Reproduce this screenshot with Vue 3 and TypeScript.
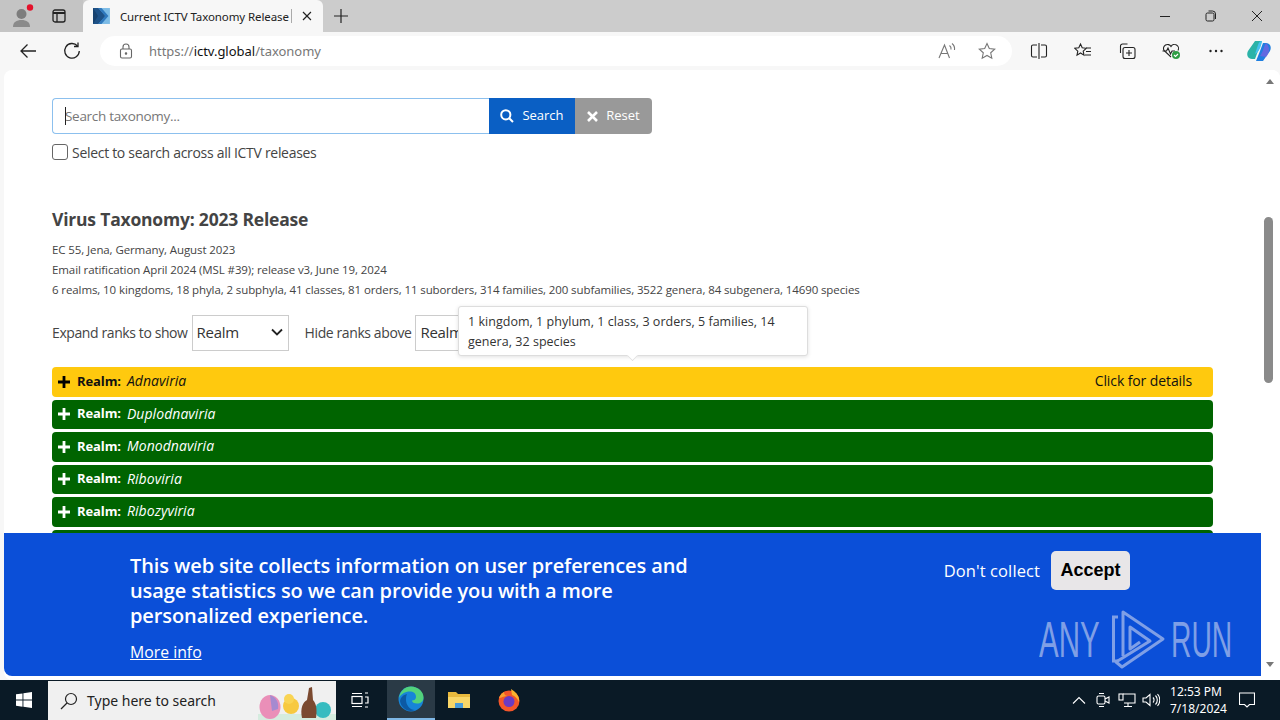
<template>
  <div class="screen">
    <!-- browser tab strip -->
    <div class="tabstrip">
      <div class="profile">
        <svg width="24" height="24" viewBox="0 0 24 24">
          <circle cx="10.500" cy="10" r="5" fill="#7d7d7d" />
          <path d="M2 23c0-5 3.500-7 8.500-7s8.500 2 8.500 7z" fill="#8a8a8a" />
          <circle cx="19" cy="3.500" r="3.200" fill="#e4112b" />
        </svg>
      </div>
      <div class="tabs-btn">
        <svg width="16" height="16" viewBox="0 0 16 16" fill="none" stroke="#222" stroke-width="1.300">
          <rect x="2" y="2" width="12" height="12" rx="2" />
          <path d="M2 5h12" stroke-width="2" />
          <path d="M6 5v9" />
        </svg>
      </div>
      <div class="tab">
        <svg class="favicon" width="17" height="16" viewBox="0 0 17 16">
          <rect width="17" height="16" fill="#7cbbe6" />
          <path d="M0 0h5l7 8-7 8H0z" fill="#17426f" />
          <path d="M5 0h3.500l7 8-7 8H5l7-8z" fill="#2f78bd" />
          <path d="M0 0l5 0 7 8-7 8H0l5-8z" fill="#1e5288" />
        </svg>
        <span class="tab-title">Current ICTV Taxonomy Release</span>
        <span class="tab-sep"></span>
        <svg width="12" height="12" viewBox="0 0 12 12" stroke="#222" stroke-width="1.200">
          <path d="M2 2l8 8M10 2l-8 8" />
        </svg>
      </div>
      <div class="newtab">
        <svg width="14" height="14" viewBox="0 0 14 14" stroke="#222" stroke-width="1.200">
          <path d="M7 0v14M0 7h14" />
        </svg>
      </div>
      <div class="winctl">
        <svg width="46" height="16" viewBox="0 0 46 16" stroke="#222" fill="none">
          <path d="M18 8.500h10" />
        </svg>
        <svg width="46" height="16" viewBox="0 0 46 16" stroke="#222" fill="none">
          <rect x="18" y="5" width="8" height="8" rx="1.500" />
          <path d="M20.500 3h4a3 3 0 0 1 3 3v5" />
        </svg>
        <svg width="46" height="16" viewBox="0 0 46 16" stroke="#222" fill="none">
          <path d="M18 3l10 10M28 3L18 13" />
        </svg>
      </div>
    </div>

    <!-- address bar -->
    <div class="toolbar">
      <svg class="nav" width="18" height="18" viewBox="0 0 18 18" fill="none" stroke="#222" stroke-width="1.300">
        <path d="M17 9H2M8.500 2.500L2 9l6.500 6.500" />
      </svg>
      <svg class="nav nav-reload" width="18" height="18" viewBox="0 0 18 18" fill="none" stroke="#222" stroke-width="1.300">
        <path d="M14.500 4A7.300 7.300 0 1 0 16.300 9" />
        <path d="M15 0.500V4.500H11" />
      </svg>
      <div class="omnibox">
        <svg width="14" height="16" viewBox="0 0 14 16" fill="none" stroke="#666" stroke-width="1.100">
          <rect x="1.500" y="6" width="11" height="9" rx="1.500" />
          <path d="M4 6V4a3 3 0 0 1 6 0v2" />
          <circle cx="7" cy="10.500" r="0.700" fill="#666" />
        </svg>
        <span class="url"><span class="url-dim">https://</span>ictv.global<span class="url-dim">/taxonomy</span></span>
        <svg class="omni-read" width="18" height="18" viewBox="0 0 18 18" fill="none" stroke="#777" stroke-width="1.100">
          <path d="M1 16L6.500 3l5 13M3 11.500h7" />
          <path d="M11.500 3.500a4 4 0 0 1 1.500 4M14 1.500a7 7 0 0 1 2.500 6.500" />
        </svg>
        <svg class="omni-star" width="18" height="18" viewBox="0 0 18 18" fill="none" stroke="#777" stroke-width="1.100">
          <path d="M9 1.500l2.300 5 5.400.6-4 3.700 1.100 5.400L9 13.500l-4.800 2.700 1.100-5.400-4-3.700 5.400-.6z" />
        </svg>
      </div>
      <div class="tools">
        <svg width="18" height="18" viewBox="0 0 18 18" fill="none" stroke="#222" stroke-width="1.100">
          <path d="M7 3H3a1.500 1.500 0 0 0-1.500 1.500v9A1.500 1.500 0 0 0 3 15h4M11 3h4a1.500 1.500 0 0 1 1.500 1.500v9A1.500 1.500 0 0 1 15 15h-4M9 1v16" />
        </svg>
        <svg width="18" height="18" viewBox="0 0 18 18" fill="none" stroke="#222" stroke-width="1.100">
          <path d="M6.500 2l1.700 3.800 4 .5-3 2.800.8 4L6.500 11l-3.500 2.100.8-4-3-2.800 4-.5zM12 6h5M12 9.500h5M11 13h6" />
        </svg>
        <svg width="18" height="18" viewBox="0 0 18 18" fill="none" stroke="#222" stroke-width="1.100">
          <path d="M2.500 11V4a2 2 0 0 1 2-2h5" />
          <rect x="5" y="5.500" width="12" height="11" rx="2" />
          <path d="M11 8v6M8 11h6" />
        </svg>
        <svg width="20" height="18" viewBox="0 0 20 18" fill="none" stroke="#222" stroke-width="1.100">
          <path d="M10 15L3 8.500a4 4 0 0 1 7-4 4 4 0 0 1 7 4" />
          <path d="M1.500 9h4l1.500-3 2.500 6 1.500-3h3" />
          <circle cx="15" cy="13" r="4" fill="#2e9e44" stroke="none" />
          <path d="M13 13l1.500 1.500L17 12" stroke="#fff" />
        </svg>
        <svg width="18" height="18" viewBox="0 0 18 18" fill="#222">
          <circle cx="3.500" cy="9" r="1.200" />
          <circle cx="9" cy="9" r="1.200" />
          <circle cx="14.500" cy="9" r="1.200" />
        </svg>
      </div>
      <svg class="copilot" width="26" height="24" viewBox="0 0 26 24">
        <path d="M9 2h7l-4 10-3 8H6C2 20 0 16 2 12z" fill="#2bb3a8" />
        <path d="M17 22h-7l4-10 3-8h3c4 0 6 4 4 8z" fill="#1f7fe0" />
        <path d="M16 2c-2 0-3 1-4 4L9 15c3-1 6-6 7-13z" fill="#45c2f0" />
        <path d="M20 4c-2 3-3 9-6 13l6 1c3-3 5-9 0-14z" fill="#7a63e0" opacity="0.75" />
      </svg>
    </div>

    <!-- page viewport -->
    <div class="viewport">
      <div class="page">
        <form class="search-row" @submit.prevent>
          <input class="search-input" type="text" placeholder="Search taxonomy..." />
          <span class="caret"></span>
          <button class="btn btn-search" type="button">
            <svg width="14" height="14" viewBox="0 0 14 14" fill="none" stroke="#fff" stroke-width="2">
              <circle cx="5.800" cy="5.800" r="4.600" />
              <path d="M9.200 9.200L13 13" />
            </svg>
            Search
          </button>
          <button class="btn btn-reset" type="button">
            <svg width="11" height="11" viewBox="0 0 11 11" stroke="#fff" stroke-width="2.600">
              <path d="M1 1l9 9M10 1l-9 9" />
            </svg>
            Reset
          </button>
        </form>
        <label class="all-releases">
          <span class="fake-check"></span>
          Select to search across all ICTV releases
        </label>

        <h1 class="title">Virus Taxonomy: 2023 Release</h1>
        <div class="meta">
          <div>EC 55, Jena, Germany, August 2023</div>
          <div>Email ratification April 2024 (MSL #39); release v3, June 19, 2024</div>
          <div>6 realms, 10 kingdoms, 18 phyla, 2 subphyla, 41 classes, 81 orders, 11 suborders, 314 families, 200 subfamilies, 3522 genera, 84 subgenera, 14690 species</div>
        </div>

        <div class="ranks">
          <span class="rank-label">Expand ranks to show</span>
          <div class="select">
            Realm
            <svg width="12" height="8" viewBox="0 0 12 8" fill="none" stroke="#222" stroke-width="1.800">
              <path d="M1 1.500l5 5 5-5" />
            </svg>
          </div>
          <span class="rank-label hide-label">Hide ranks above</span>
          <div class="select">
            Realm
            <svg width="12" height="8" viewBox="0 0 12 8" fill="none" stroke="#222" stroke-width="1.800">
              <path d="M1 1.500l5 5 5-5" />
            </svg>
          </div>
          <div class="tooltip">1 kingdom, 1 phylum, 1 class, 3 orders, 5 families, 14 genera, 32 species</div>
        </div>

        <div class="realms">
          <div
            v-for="(realm, i) in realms"
            :key="realm"
            class="realm"
            :class="{ active: i === 0 }"
          >
            <svg width="12" height="12" viewBox="0 0 12 12" :stroke="i === 0 ? '#000' : '#fff'" stroke-width="2.800">
              <path d="M6 0v12M0 6h12" />
            </svg>
            <b>Realm:</b>
            <i>{{ realm }}</i>
            <span v-if="i === 0" class="details">Click for details</span>
          </div>
        </div>
      </div>

      <!-- scrollbar -->
      <div class="scrollbar">
        <span class="arrow arrow-up"></span>
        <span class="thumb"></span>
        <span class="arrow arrow-down"></span>
      </div>

      <!-- cookie banner -->
      <div class="banner">
        <div class="banner-text">
          <p>This web site collects information on user preferences and usage statistics so we can provide you with a more personalized experience.</p>
          <a class="more">More info</a>
        </div>
        <div class="banner-actions">
          <span class="dont">Don't collect</span>
          <button class="accept" type="button">Accept</button>
        </div>
      </div>
      <div class="watermark">
        <span class="wm-text wm-any">ANY</span>
        <svg width="56" height="62" viewBox="0 0 56 62" fill="none" stroke="#7f9fe6" stroke-width="3">
          <path d="M8 8H3.500v44H8" />
          <path d="M13 47V3L53 30 12 58 6 53 40 32 20 18V40L30 33" stroke-linejoin="round" />
        </svg>
        <span class="wm-text wm-run">RUN</span>
      </div>
    </div>

    <!-- windows taskbar -->
    <div class="taskbar">
      <div class="start">
        <svg width="16" height="16" viewBox="0 0 16 16" fill="#fff">
          <path d="M0 2.300l6.500-.9v6.200H0zM7.400 1.300L16 0v7.600H7.400zM0 8.500h6.500v6.200L0 13.800zM7.400 8.500H16V16l-8.600-1.200z" />
        </svg>
      </div>
      <div class="win-search">
        <svg width="18" height="18" viewBox="0 0 18 18" fill="none" stroke="#222" stroke-width="1.200">
          <circle cx="11" cy="7" r="5.500" />
          <path d="M7 11l-6 6" />
        </svg>
        <span>Type here to search</span>
        <svg class="eggs" width="78" height="39" viewBox="0 0 78 39">
          <rect x="0" y="33" width="78" height="6" fill="#d5ecdf" />
          <ellipse cx="12" cy="26" rx="10.500" ry="12" fill="#ea8fb8" />
          <path d="M12 14c6 2 9 7 8 14l-6 2z" fill="#a68ad0" />
          <ellipse cx="33" cy="25" rx="8" ry="8" fill="#f7c93f" />
          <circle cx="31" cy="18" r="5" fill="#f9d453" />
          <ellipse cx="65" cy="29" rx="8" ry="8" fill="#37bcc0" />
          <path d="M44 37c-2-10 1-16 5-18l2-12 3-1 1 13c4 4 4 12 3 18z" fill="#7b4a30" />
        </svg>
      </div>
      <div class="task-icon">
        <svg width="18" height="18" viewBox="0 0 18 18" fill="none" stroke="#fff" stroke-width="1.200">
          <rect x="1" y="5.500" width="10" height="7" />
          <path d="M1 2.500h10M1 15.500h10M14 2h3M14 6h3v6h-3M14 16h3" />
        </svg>
      </div>
      <div class="task-icon task-edge">
        <svg width="26" height="26" viewBox="0 0 26 26">
          <circle cx="13" cy="13" r="12.500" fill="#1784d8" />
          <path d="M1 12C2 5 7 .5 13 .5c7 0 12.500 5 12.500 11 0 4-3 6-6.500 6-3 0-5-1-5-3 2 0 4-1 4-3.500C18 7 15 5.500 12 5.500 7 5.500 3 8 1 12z" fill="#52d27c" />
          <path d="M8 14c0 5 4 10 9 10-7 3-14-2-15-9 1-4 3-6 7-7-1 2-1 4-1 6z" fill="#0c59a4" />
        </svg>
      </div>
      <div class="task-icon">
        <svg width="24" height="20" viewBox="0 0 24 20">
          <path d="M1 2h8l2 2h12v14H1z" fill="#e8b93d" />
          <rect x="1" y="7" width="22" height="11" fill="#f9d667" />
          <rect x="8" y="13" width="8" height="5" fill="#4a9bd8" />
        </svg>
      </div>
      <div class="task-icon task-fox">
        <svg width="24" height="24" viewBox="0 0 24 24">
          <circle cx="12" cy="13" r="10.500" fill="#f4562a" />
          <path d="M14 1c5 3 9 8 8 13-2-4-4-6-7-7z" fill="#fbb32d" />
          <path d="M2 10c1-3 3-5 5-6 0 3 2 4 4 4-4 0-7 2-9 2z" fill="#f9a12e" />
          <circle cx="12" cy="13.500" r="5.500" fill="#6a3bc4" />
        </svg>
      </div>
      <div class="tray">
        <span class="tray-item">
          <svg width="14" height="8" viewBox="0 0 14 8" fill="none" stroke="#fff" stroke-width="1.100">
            <path d="M1 7.500l6-6 6 6" />
          </svg>
        </span>
        <span class="tray-item">
          <svg width="14" height="18" viewBox="0 0 14 18" fill="none" stroke="#fff" stroke-width="1.100">
            <rect x="1" y="5" width="8" height="8" rx="1.500" />
            <path d="M9 8l4-2v6l-4-2M3 2.500h5M3 15.500h5" />
          </svg>
        </span>
        <span class="tray-item">
          <svg width="18" height="16" viewBox="0 0 18 16" fill="none" stroke="#fff" stroke-width="1.100">
            <path d="M5 2h12v9H6M10 11v3M6 14.500h8" />
            <rect x="1" y="2" width="4" height="6" />
          </svg>
        </span>
        <span class="tray-item">
          <svg width="18" height="14" viewBox="0 0 18 14" fill="none" stroke="#fff" stroke-width="1.100">
            <path d="M1 5h3l4-3.500v11L4 9H1zM11 4.500a3.500 3.500 0 0 1 0 5M13.500 2.500a6.500 6.500 0 0 1 0 9M15.500 1a9 9 0 0 1 0 12" />
          </svg>
        </span>
        <div class="clock">
          <div>12:53 PM</div>
          <div>7/18/2024</div>
        </div>
        <svg class="notify" width="16" height="16" viewBox="0 0 16 16" fill="none" stroke="#fff" stroke-width="1.100">
          <path d="M.5 1h15v11.500h-5L8 15l-2.500-2.500h-5z" />
        </svg>
      </div>
    </div>
  </div>
</template>

<script setup lang="ts">
const realms: string[] = [
  'Adnaviria',
  'Duplodnaviria',
  'Monodnaviria',
  'Riboviria',
  'Ribozyviria',
  'Varidnaviria'
]
</script>

<style>
html,
body {
  margin: 0;
  overflow: hidden;
}
</style>

<style scoped>
.screen {
  width: 1280px;
  height: 720px;
  display: flex;
  flex-direction: column;
  overflow: hidden;
  background: #f7f7f7;
  font-family: "Open Sans", "Liberation Sans", sans-serif;
  color: #444;
}

.tabstrip {
  height: 32px;
  flex: none;
  display: flex;
  align-items: flex-end;
  background: #cccccc;
}
.profile {
  width: 40px;
  height: 32px;
  padding: 4px 0 0 11px;
  box-sizing: border-box;
  background: #c4c4c4;
}
.tabs-btn {
  width: 43px;
  height: 32px;
  padding-right: 6px;
  box-sizing: border-box;
  display: flex;
  align-items: center;
  justify-content: center;
  background: #c4c4c4;
}
.tab {
  width: 240px;
  height: 32px;
  box-sizing: border-box;
  padding: 0 10px;
  display: flex;
  align-items: center;
  background: #f7f7f7;
  border-radius: 6px 6px 0 0;
  font-family: "Noto Sans", sans-serif;
  font-size: 11.500px;
  letter-spacing: -0.1px;
  color: #222;
}
.favicon {
  margin-right: 10px;
}
.tab-title {
  width: 170px;
  white-space: nowrap;
}
.tab-sep {
  width: 1px;
  height: 14px;
  background: #aaa;
  margin: 0 9px 0 2px;
}
.newtab {
  width: 36px;
  height: 32px;
  display: flex;
  align-items: center;
  justify-content: center;
}
.winctl {
  margin-left: auto;
  height: 32px;
  display: flex;
  align-items: center;
}

.toolbar {
  height: 38px;
  flex: none;
  display: flex;
  align-items: center;
  background: #f7f7f7;
  position: relative;
}
.nav {
  margin-left: 19px;
  flex: none;
}
.nav-reload {
  margin-left: 26px;
}
.omnibox {
  margin-left: 19px;
  width: 912px;
  height: 30px;
  box-sizing: border-box;
  padding: 0 16px 0 19px;
  display: flex;
  align-items: center;
  background: #fff;
  border-radius: 15px;
}
.url {
  margin-left: 16px;
  font-family: "Noto Sans", sans-serif;
  font-size: 13px;
  letter-spacing: -0.02px;
  color: #111;
}
.url-dim {
  color: #777;
}
.omni-read {
  margin-left: auto;
}
.omni-star {
  margin-left: 22px;
}
.tools {
  margin-left: 18px;
  width: 195px;
  display: flex;
  align-items: center;
  justify-content: space-between;
}
.copilot {
  margin-left: 21px;
}

.viewport {
  flex: 1;
  position: relative;
  margin-left: 4px;
  background: #fff;
  border-radius: 8px 8px 0 8px;
  overflow: hidden;
}
.page {
  padding: 28px 0 0 48px;
  width: 1161px;
}
.search-row {
  position: relative;
  display: flex;
  width: 600px;
  height: 36px;
}
.search-input {
  flex: 1;
  min-width: 0;
  padding: 0 12px;
  border: 1px solid #8cc0ee;
  border-right: none;
  border-radius: 4px 0 0 4px;
  outline: none;
  font-family: "Open Sans", sans-serif;
  font-size: 13.500px;
  letter-spacing: -0.3px;
}
.search-input::placeholder {
  color: #777;
}
.caret {
  position: absolute;
  left: 13px;
  top: 9px;
  width: 1px;
  height: 18px;
  background: #222;
}
.btn {
  border: none;
  padding: 0 0 2px;
  color: #fff;
  font-family: "Open Sans", sans-serif;
  font-size: 13px;
  display: flex;
  align-items: center;
  justify-content: center;
  gap: 8px;
}
.btn svg {
  margin-top: 2px;
}
.btn-search {
  width: 86px;
  background: #0a5fc4;
}
.btn-reset {
  width: 77px;
  background: #999;
  border-radius: 0 4px 4px 0;
}
.all-releases {
  margin-top: 10px;
  display: flex;
  align-items: center;
  gap: 4px;
  height: 16px;
  font-size: 14px;
  letter-spacing: -0.3px;
}
.fake-check {
  width: 14px;
  height: 14px;
  border: 1px solid #666;
  border-radius: 3px;
}
.title {
  margin: 47px 0 0;
  font-size: 17.500px;
  line-height: 24px;
  font-weight: 700;
  letter-spacing: -0.2px;
  color: #444;
}
.meta {
  margin-top: 9px;
  font-size: 11.500px;
  line-height: 20px;
  letter-spacing: -0.1px;
}
.ranks {
  position: relative;
  margin-top: 15px;
  display: flex;
  align-items: center;
  height: 36px;
  font-size: 14px;
  letter-spacing: -0.4px;
}
.rank-label {
  margin-bottom: 2px;
}
.select {
  margin-left: 4px;
  width: 97px;
  height: 36px;
  box-sizing: border-box;
  padding: 0 5px 2px 4px;
  display: flex;
  align-items: center;
  justify-content: space-between;
  border: 1px solid #ccc;
  font-size: 15px;
  letter-spacing: -0.3px;
  color: #333;
}
.hide-label {
  margin-left: 16px;
}
.tooltip {
  position: absolute;
  left: 406px;
  top: -9px;
  width: 350px;
  height: 50px;
  box-sizing: border-box;
  padding: 5px 9px;
  background: #fff;
  border: 1px solid #ddd;
  border-radius: 3px;
  box-shadow: 0 1px 4px rgba(0, 0, 0, 0.12);
  font-size: 12.500px;
  line-height: 20px;
  letter-spacing: 0.03px;
  color: #333;
}
.tooltip::after {
  content: "";
  position: absolute;
  left: 168px;
  bottom: -6px;
  width: 10px;
  height: 10px;
  background: #fff;
  border-right: 1px solid #ddd;
  border-bottom: 1px solid #ddd;
  transform: rotate(45deg) scale(0.7);
}
.realms {
  margin-top: 16px;
  display: flex;
  flex-direction: column;
  gap: 3px;
}
.realm {
  height: 29.500px;
  box-sizing: border-box;
  padding: 0 6px 2px;
  display: flex;
  align-items: center;
  gap: 4px;
  background: #006400;
  border-radius: 4px;
  color: #fff;
  font-size: 13px;
  letter-spacing: -0.1px;
}
.realm svg {
  margin: 2px 3px 0 0;
}
.realm i {
  margin-left: 2px;
  font-size: 14px;
  letter-spacing: 0.05px;
}
.realm.active {
  background: #ffc90e;
  color: #111;
}
.details {
  margin-left: auto;
  margin-right: 15px;
  font-size: 14px;
}

.scrollbar {
  position: absolute;
  right: 0;
  top: 0;
  bottom: 0;
  width: 19px;
  background: #fff;
}
.arrow {
  position: absolute;
  left: 5px;
  border-left: 4px solid transparent;
  border-right: 4px solid transparent;
}
.arrow-up {
  top: 9px;
  border-bottom: 5px solid #777;
}
.arrow-down {
  bottom: 13px;
  border-top: 5px solid #777;
}
.thumb {
  position: absolute;
  left: 3px;
  top: 147px;
  width: 9px;
  height: 166px;
  border-radius: 5px;
  background: #8a8a8a;
}

.banner {
  position: absolute;
  left: 0;
  top: 463px;
  width: 1257px;
  height: 143px;
  box-sizing: border-box;
  padding: 20px 131px 0 126px;
  display: flex;
  justify-content: space-between;
  background: #0b4fd8;
  border-radius: 0 0 0 8px;
  color: #fff;
}
.banner-text {
  width: 570px;
}
.banner-text p {
  margin: 0;
  font-size: 20px;
  line-height: 25px;
  font-weight: 600;
  letter-spacing: -0.1px;
}
.more {
  display: block;
  margin-top: 12px;
  font-size: 15.800px;
  line-height: 24px;
  text-decoration: underline;
}
.banner-actions {
  margin-top: -2px;
  height: 38px;
  display: flex;
  align-items: center;
  gap: 11px;
}
.dont {
  font-size: 16.500px;
  letter-spacing: 0.1px;
}
.accept {
  width: 79px;
  height: 39px;
  border: none;
  border-radius: 5px;
  background: #e8e6e8;
  color: #000;
  font-family: "Liberation Sans", sans-serif;
  font-size: 18px;
  font-weight: 700;
}

.watermark {
  position: absolute;
  left: 1035px;
  top: 539px;
  display: flex;
  align-items: center;
  color: #7f9fe6;
}
.wm-text {
  display: inline-block;
  font-family: "Liberation Sans", sans-serif;
  font-size: 50px;
  line-height: 62px;
  transform-origin: left center;
  white-space: nowrap;
}
.wm-any {
  width: 71px;
  transform: scaleX(0.59);
}
.wm-run {
  width: 61px;
  margin-left: 5px;
  transform: scaleX(0.565);
}

.taskbar {
  height: 40px;
  flex: none;
  display: flex;
  align-items: center;
  background: #0a1a26;
  color: #fff;
}
.start {
  width: 48px;
  height: 40px;
  display: flex;
  align-items: center;
  justify-content: center;
}
.win-search {
  width: 288px;
  height: 39px;
  box-sizing: border-box;
  padding-left: 12px;
  margin-top: 1px;
  display: flex;
  align-items: center;
  gap: 9px;
  position: relative;
  background: #f0f0f0;
  font-family: "Noto Sans", sans-serif;
  font-size: 14px;
  color: #222;
}
.eggs {
  position: absolute;
  right: 0;
  top: 0;
}
.task-icon {
  width: 48px;
  height: 40px;
  display: flex;
  align-items: center;
  justify-content: center;
  box-sizing: border-box;
}
.task-edge {
  margin-left: 3px;
  background: #2a3a46;
  border-bottom: 2px solid #7fb8e6;
}
.task-fox {
  margin-left: 2px;
}
.tray {
  margin-left: auto;
  height: 40px;
  display: flex;
  align-items: center;
}
.tray-item {
  width: 24px;
  display: flex;
  justify-content: center;
}
.clock {
  margin-left: 7px;
  width: 52px;
  font-family: "Noto Sans", sans-serif;
  font-size: 12px;
  line-height: 17px;
  text-align: center;
  white-space: nowrap;
}
.notify {
  margin: 0 25px 0 17px;
}
</style>
